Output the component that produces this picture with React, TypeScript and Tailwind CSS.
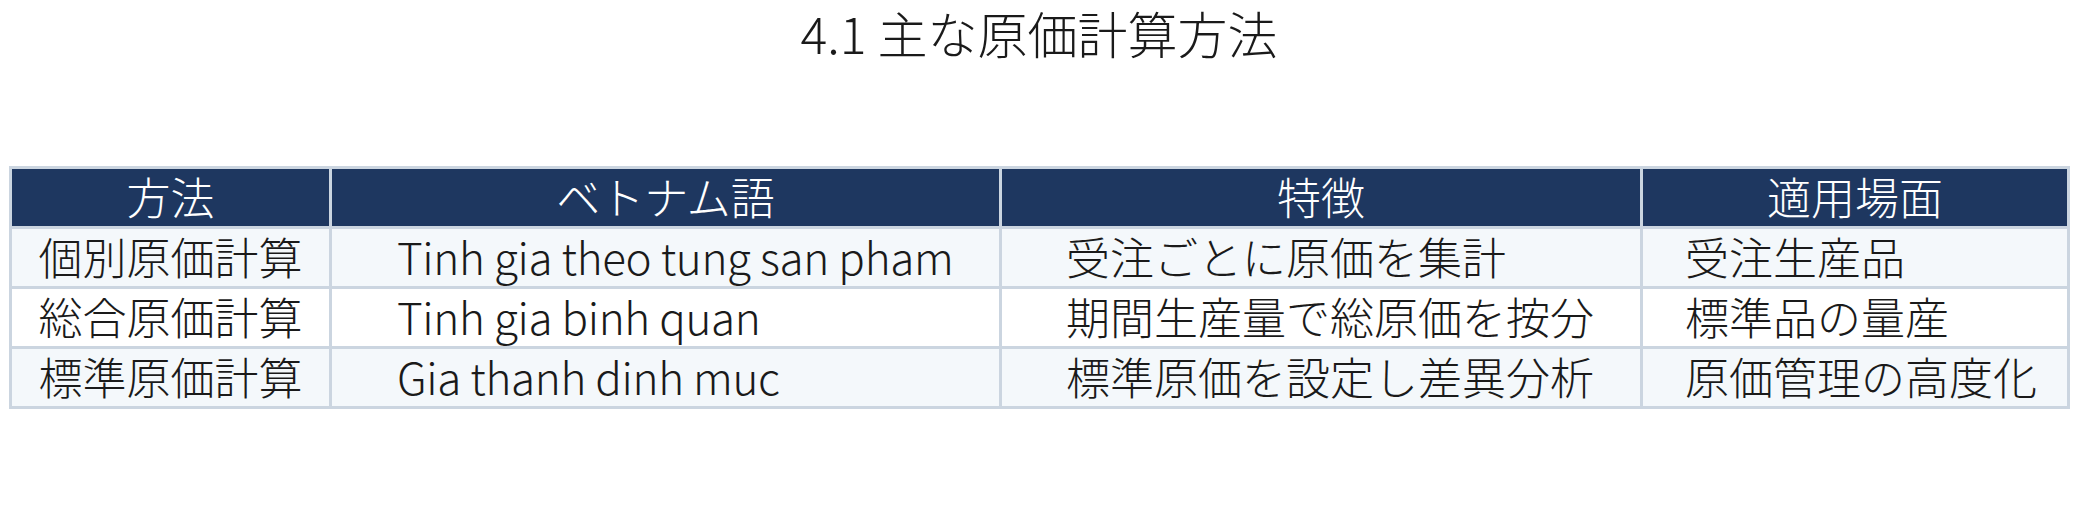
const rows = [
  ["個別原価計算", "Tinh gia theo tung san pham", "受注ごとに原価を集計", "受注生産品"],
  ["総合原価計算", "Tinh gia binh quan", "期間生産量で総原価を按分", "標準品の量産"],
  ["標準原価計算", "Gia thanh dinh muc", "標準原価を設定し差異分析", "原価管理の高度化"],
];

const headers = ["方法", "ベトナム語", "特徴", "適用場面"];

export default function App() {
  return (
    <div
      className="w-[2078px] h-[513px] bg-white text-[#1a1a1a] font-extralight"
      style={{ fontFamily: '"Noto Sans CJK JP", "Noto Sans", sans-serif' }}
    >
      <h1 className="text-center text-[50px] leading-[60px] pt-[2px] font-extralight">4.1 主な原価計算方法</h1>

      <div className="mt-[104px] ml-[9px] w-fit grid grid-cols-[317px_667px_638px_424px] gap-[3px] p-[3px] bg-[#cbd5e0] text-[44px] leading-none">
        {headers.map((h) => (
          <div key={h} className="h-[57px] bg-[#1e3760] text-white flex items-center justify-center pb-[4px]">
            {h}
          </div>
        ))}
        {rows.map((r, i) => {
          const bg = i % 2 === 0 ? "bg-[#f4f8fb]" : "bg-white";
          return [
            <div key={i + "a"} className={`h-[57px] ${bg} flex items-center justify-center pb-[4px]`}>
              {r[0]}
            </div>,
            <div
              key={i + "b"}
              className={`h-[57px] ${bg} flex items-center pl-[65px] pb-[4px] whitespace-nowrap tracking-[-0.35px]`}
            >
              {r[1]}
            </div>,
            <div key={i + "c"} className={`h-[57px] ${bg} flex items-center pl-[64px] pb-[4px] whitespace-nowrap`}>
              {r[2]}
            </div>,
            <div key={i + "d"} className={`h-[57px] ${bg} flex items-center pl-[42px] pb-[4px] whitespace-nowrap`}>
              {r[3]}
            </div>,
          ];
        })}
      </div>
    </div>
  );
}
